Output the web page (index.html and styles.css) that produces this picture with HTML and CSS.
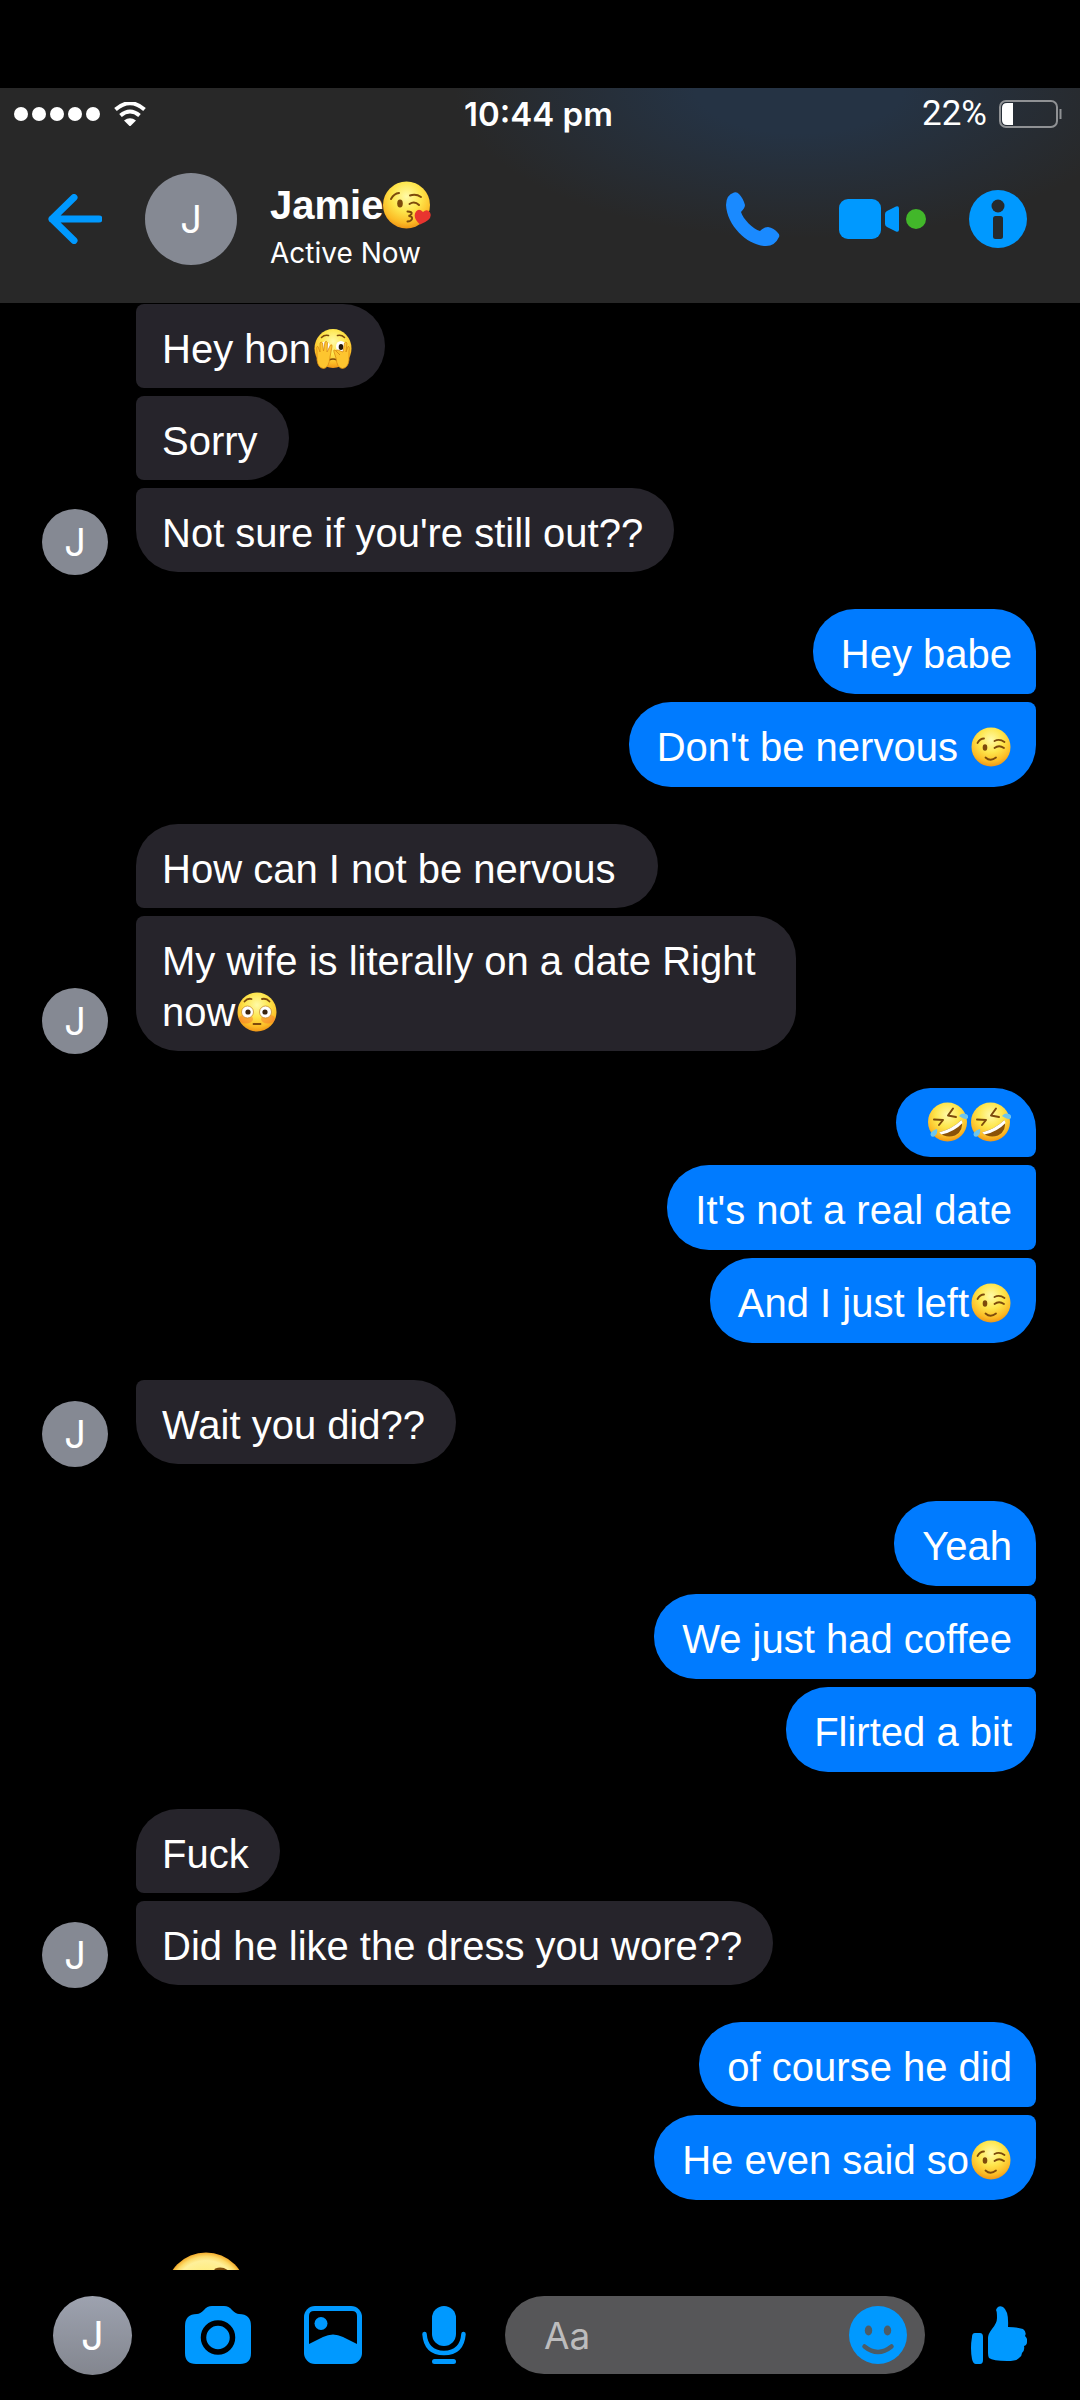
FILE: index.html
```html
<!DOCTYPE html>
<html lang="en">
<head>
<meta charset="utf-8">
<meta name="viewport" content="width=device-width, initial-scale=1">
<title>Jamie</title>
<link rel="stylesheet" href="styles.css">
</head>
<body>
<svg class="defs" aria-hidden="true">
  <defs>
    <radialGradient id="face" cx="50%" cy="32%" r="70%">
      <stop offset="0" stop-color="#fffaa8"/>
      <stop offset=".45" stop-color="#fee64c"/>
      <stop offset=".8" stop-color="#fcbb25"/>
      <stop offset="1" stop-color="#ee9014"/>
    </radialGradient>
    <radialGradient id="bigface" cx="50%" cy="50%" r="50%">
      <stop offset="0" stop-color="#fee64c"/>
      <stop offset=".8" stop-color="#fff09a"/>
      <stop offset=".9" stop-color="#fddc6a"/>
      <stop offset="1" stop-color="#f3ab2b"/>
    </radialGradient>
    <symbol id="wink" viewBox="0 0 40 40">
      <circle cx="20" cy="20" r="19.500" fill="url(#face)"/>
      <ellipse cx="14" cy="20.500" rx="2.300" ry="3.200" fill="#7d4a0b"/>
      <path d="M6.500 16q2.500-4.500 6.500-4.500M23.500 14q5-2.500 10 1M23.500 21q4.500-3.500 9.500 0M14.500 30.500q5 4.500 10.500 0" fill="none" stroke="#7d4a0b" stroke-width="1.800" stroke-linecap="round"/>
    </symbol>
    <symbol id="rofl" viewBox="0 0 40 40">
      <circle cx="19.500" cy="20" r="19.500" fill="url(#face)"/>
      <path d="M6 17.500l9 .5-4 5M25 6.500l-5 7 8 1.500" fill="none" stroke="#7d4a0b" stroke-width="2" stroke-linecap="round" stroke-linejoin="round"/>
      <path d="M11 30.500Q24 27 33.500 18Q36 29 27 33.500Q18 36.500 11 30.500Z" fill="#8a5208"/>
      <path d="M11 30.500Q24 27 33.500 18L34.500 21Q26 30 13.500 32.500Z" fill="#fff"/>
      <path d="M31 14q3-3.500 7-2q3 1.500 2 4q-2 2.500-9-2ZM9 27q1 5-3 7.500q-3 1-3.500-2q0-3.500 6.500-5.500Z" fill="#6cc5ee"/>
    </symbol>
    <symbol id="peek" viewBox="0 0 40 40">
      <ellipse cx="20" cy="19.500" rx="18.500" ry="19.500" fill="url(#face)"/>
      <ellipse cx="12" cy="18" rx="5" ry="5.500" fill="#fff"/>
      <ellipse cx="28" cy="17.500" rx="5" ry="5.500" fill="#fff"/>
      <ellipse cx="28" cy="18" rx="2.300" ry="3" fill="#26180a"/>
      <path d="M8.500 8.500q3-3 7-2M24.500 6.500q4-1 7 2M16 31q4-2 8 0" fill="none" stroke="#7d4a0b" stroke-width="1.600" stroke-linecap="round"/>
      <path d="M4 22q-1-5 1-4.500L7 23 7 14q1-2 2.500 0l1 8L12 13q1.500-1.500 2.500.5L14 23l3.500-7q2-1 1.500 1.500L17 28q-1 11-6.500 11.500Q5 39 4 31Z" fill="#fdc52f" stroke="#d98c12" stroke-width=".8"/>
      <path d="M36 22q1-5-1-4.500L33 23l1-9q-1-2-2.500 0L30 23 25 21q-2-.5-1.500 1.500L27 26l-5-5q-2-.5-1 2l2 6q1 10 6.500 10.500Q35 39 36 31Z" fill="#fdc52f" stroke="#d98c12" stroke-width=".8"/>
    </symbol>
    <symbol id="flushed" viewBox="0 0 40 40">
      <circle cx="20" cy="20" r="19.500" fill="url(#face)"/>
      <ellipse cx="9" cy="27" rx="7" ry="4.500" fill="#f4642a" opacity=".4"/>
      <ellipse cx="31" cy="27" rx="7" ry="4.500" fill="#f4642a" opacity=".4"/>
      <circle cx="10.500" cy="20" r="6" fill="#fff" stroke="#c98d2b" stroke-width=".8"/>
      <circle cx="28.500" cy="20" r="6" fill="#fff" stroke="#c98d2b" stroke-width=".8"/>
      <circle cx="11" cy="20" r="2.600" fill="#3a2410"/>
      <circle cx="28" cy="20" r="2.600" fill="#3a2410"/>
      <path d="M7.500 9.500q3-3.500 7-2.500M25 7q4.500-1 7.500 2.500M16.500 32h7" fill="none" stroke="#7d4a0b" stroke-width="1.800" stroke-linecap="round"/>
    </symbol>
    <symbol id="kiss" viewBox="0 0 48 48">
      <circle cx="23.500" cy="24" r="23.500" fill="url(#face)"/>
      <ellipse cx="17" cy="22.500" rx="2.800" ry="4" fill="#7d4a0b"/>
      <path d="M8 18q3-5.500 8-6M27 14.500q6-2 11 1.500M26.500 23q5-3.500 9.500 1M24.500 30.500q5 0 4 2.500-1 1.500-3 2 4 0 3.500 3-1 2.500-4.500 2.500" fill="none" stroke="#7d4a0b" stroke-width="2" stroke-linecap="round"/>
      <path d="M37 43.500Q29 36 33 30.500q3-3.500 7 .5 4-3.500 7 .5 3.500 7-10 12Z" fill="#e8352f"/>
    </symbol>
    <symbol id="think" viewBox="0 0 82 82">
      <circle cx="41" cy="41" r="40.500" fill="url(#bigface)"/>
      <path d="M51 18q7-3 14 4M20 24q6-4 12-1" fill="none" stroke="#7d4a0b" stroke-width="3" stroke-linecap="round"/>
      <circle cx="28" cy="34" r="4" fill="#7d4a0b"/>
      <circle cx="55" cy="34" r="4" fill="#7d4a0b"/>
      <path d="M28 58h24" stroke="#7d4a0b" stroke-width="4" stroke-linecap="round"/>
    </symbol>
  </defs>
</svg>

<header class="top">
  <div class="status">
    <div class="signal">
      <span class="dot"></span><span class="dot"></span><span class="dot"></span><span class="dot"></span><span class="dot"></span>
      <svg class="wifi" viewBox="0 0 32 24" role="img" aria-label="Wi-Fi">
        <path d="M1.500 7.500Q16-5 30.500 7.500M6.500 13.500q9.500-8 19 0" fill="none" stroke="#fff" stroke-width="4"/>
        <path d="M10 18.500q6-4.500 12 0L16 24.500Z" fill="#fff"/>
      </svg>
    </div>
    <time class="clock">10:44 pm</time>
    <div class="power">
      <span>22%</span>
      <svg class="battery" viewBox="0 0 64 28" aria-hidden="true">
        <rect x="1" y="1" width="57" height="26" rx="6" fill="none" stroke="#8f9194" stroke-width="2"/>
        <path d="M8 3h6v22H8q-5 0-5-5V8q0-5 5-5Z" fill="#fff"/>
        <path d="M61.500 9v10" stroke="#8f9194" stroke-width="2"/>
      </svg>
    </div>
  </div>
  <div class="nav">
    <button class="icon" aria-label="Back">
      <svg width="54" height="50" viewBox="0 0 54 50"><path d="M26 3.500L4 25l22 21.500M4 25h47" fill="none" stroke="#0099ff" stroke-width="7" stroke-linecap="round" stroke-linejoin="round"/></svg>
    </button>
    <span class="avatar avatar-large">J</span>
    <div class="who">
      <h1 class="name">Jamie<svg class="emoji-name" role="img" aria-label="😘"><use href="#kiss"/></svg></h1>
      <p class="active">Active Now</p>
    </div>
    <button class="icon call" aria-label="Voice call">
      <svg width="54" height="54" viewBox="0 0 54 54"><path d="M8 0.500Q0 3 0 13C1 34 22 54 40 54q9 0 13-9 1-2-1-4-4-5-10-6-4 0-8 4C27 37 17 27 15 20q4-4 4-7Q17 6 13 2 11-.5 8 .5Z" fill="#1a8aff"/></svg>
    </button>
    <button class="icon video" aria-label="Video call">
      <svg width="60" height="40" viewBox="0 0 60 40"><rect width="42" height="40" rx="9" fill="#0099ff"/><path d="M46 15q0-2 2-3l9-4.500q3-1 3 2v21q0 3-3 2L48 28q-2-1-2-3Z" fill="#0099ff"/></svg>
      <span class="online"></span>
    </button>
    <button class="icon" aria-label="Conversation details">
      <svg width="58" height="58" viewBox="0 0 58 58"><circle cx="29" cy="29" r="29" fill="#0099ff"/><circle cx="29" cy="16" r="6.500" fill="#262a2c"/><rect x="24" y="26" width="10" height="23" rx="2.500" fill="#262a2c"/></svg>
    </button>
  </div>
</header>

<main class="chat">
  <section class="group in">
    <span class="avatar">J</span>
    <div class="stack">
      <p class="bubble">Hey hon<svg class="emoji" role="img" aria-label="🫣"><use href="#peek"/></svg></p>
      <p class="bubble">Sorry</p>
      <p class="bubble">Not sure if you're still out??</p>
    </div>
  </section>
  <section class="group out">
    <div class="stack">
      <p class="bubble">Hey babe</p>
      <p class="bubble">Don't be nervous <svg class="emoji" role="img" aria-label="😉"><use href="#wink"/></svg></p>
    </div>
  </section>
  <section class="group in first">
    <span class="avatar">J</span>
    <div class="stack">
      <p class="bubble">How can I not be nervous&nbsp;</p>
      <p class="bubble">My wife is literally on a date Right now<svg class="emoji" role="img" aria-label="😳"><use href="#flushed"/></svg></p>
    </div>
  </section>
  <section class="group out">
    <div class="stack">
      <p class="bubble emoji-only"><svg class="emoji" role="img" aria-label="🤣"><use href="#rofl"/></svg><svg class="emoji" role="img" aria-label="🤣"><use href="#rofl"/></svg></p>
      <p class="bubble">It's not a real date</p>
      <p class="bubble">And I just left<svg class="emoji" role="img" aria-label="😉"><use href="#wink"/></svg></p>
    </div>
  </section>
  <section class="group in">
    <span class="avatar">J</span>
    <div class="stack">
      <p class="bubble">Wait you did??</p>
    </div>
  </section>
  <section class="group out">
    <div class="stack">
      <p class="bubble">Yeah</p>
      <p class="bubble">We just had coffee</p>
      <p class="bubble">Flirted a bit</p>
    </div>
  </section>
  <section class="group in first">
    <span class="avatar">J</span>
    <div class="stack">
      <p class="bubble">Fuck</p>
      <p class="bubble">Did he like the dress you wore??</p>
    </div>
  </section>
  <section class="group out">
    <div class="stack">
      <p class="bubble">of course he did</p>
      <p class="bubble">He even said so<svg class="emoji" role="img" aria-label="😉"><use href="#wink"/></svg></p>
    </div>
  </section>
  <section class="group in">
    <div class="stack alone">
      <svg class="emoji-big" role="img" aria-label="🤔"><use href="#think"/></svg>
    </div>
  </section>
</main>

<footer class="composer">
  <span class="avatar avatar-me">J</span>
  <button class="icon camera" aria-label="Camera">
    <svg width="66" height="58" viewBox="0 0 66 58"><path d="M27 0h12q5 0 8 4 4 4 7 4 12 0 12 12v27q0 11-11 11H11Q0 58 0 47V20Q0 8 12 8q3 0 7-4 3-4 8-4Z" fill="#0099ff"/><circle cx="33" cy="31.500" r="14.500" fill="none" stroke="#000" stroke-width="5.500"/></svg>
  </button>
  <button class="icon photo" aria-label="Photos">
    <svg width="58" height="58" viewBox="0 0 58 58"><rect width="58" height="58" rx="11" fill="#0099ff"/><path d="M5 38V10q0-5 5-5h38q5 0 5 5v28l-14-7q-10-5-20 0Z" fill="#000"/><circle cx="17" cy="17.500" r="6.500" fill="#0099ff"/></svg>
  </button>
  <button class="icon mic" aria-label="Voice message">
    <svg width="44" height="58" viewBox="0 0 44 58"><rect x="10" width="24" height="40" rx="12" fill="#0099ff"/><path d="M2.500 28Q4 47 22 47t19.500-19" fill="none" stroke="#0099ff" stroke-width="4.500" stroke-linecap="round"/><rect x="10" y="53" width="24" height="5" rx="2.500" fill="#0099ff"/></svg>
  </button>
  <div class="field">
    <input class="input" type="text" placeholder="Aa" aria-label="Message">
    <button class="icon" aria-label="Stickers">
      <svg width="58" height="58" viewBox="0 0 58 58"><circle cx="29" cy="29" r="29" fill="#0099ff"/><ellipse cx="19.500" cy="24.500" rx="3.700" ry="5" fill="#4d5c66"/><ellipse cx="38.500" cy="24.500" rx="3.700" ry="5" fill="#4d5c66"/><path d="M15.500 40.500q13.500 11 27 0" fill="none" stroke="#4d5c66" stroke-width="4.500" stroke-linecap="round"/></svg>
    </button>
  </div>
  <button class="icon like" aria-label="Send like">
    <svg width="56" height="58" viewBox="0 0 56 58"><path d="M4 27h5q3 0 3 4v23q0 4-3 4H5q-3 0-4-5-2-11 0-22 0-4 3-4Z" fill="#0099ff"/><path d="M26 2q2-3 6-1 6 4 5 20 9 0 15 2 4 3 2 7 3 3 2 6 0 3-3 4 1 4-2 7 0 3-3 5-2 3-12 3-14 0-18-3-1-2-1-5V32q0-4 4-9 5-6 5-11 0-7-1-8Z" fill="#0099ff"/></svg>
  </button>
</footer>
</body>
</html>
```
FILE: styles.css
```css
:root {
  --sent: #007bff;
  --received: #26242b;
  --avatar: #858993;
}

* {
  box-sizing: border-box;
}

body {
  margin: 0;
  padding-top: 88px;
  height: 100vh;
  display: flex;
  flex-direction: column;
  background: #000;
  color: #fff;
  font-family: Inter, "Liberation Sans", sans-serif;
}

h1,
p {
  margin: 0;
}

svg {
  flex: none;
}

.defs {
  position: absolute;
  width: 0;
  height: 0;
}

.icon {
  display: flex;
  align-items: center;
  flex: none;
  padding: 0;
  border: 0;
  background: none;
}

/* Header */

.top {
  flex: none;
  background: radial-gradient(ellipse 32% 70% at 74% 0, #253344 30%, transparent) #282828;
}

.status {
  display: grid;
  grid-template-columns: 1fr auto 1fr;
  align-items: center;
  height: 51px;
  padding: 0 17px 0 14px;
  font-size: 33px;
  line-height: 40px;
}

.signal {
  display: flex;
  align-items: center;
  gap: 4px;
}

.dot {
  width: 14px;
  height: 14px;
  border-radius: 50%;
  background: #fff;
}

.wifi {
  width: 32px;
  height: 24px;
  margin-left: 10px;
}

.clock {
  font-weight: 600;
}

.power {
  display: flex;
  justify-content: flex-end;
  align-items: center;
  gap: 12px;
  font-family: Roboto, "Liberation Sans", sans-serif;
  font-size: 35px;
}

.battery {
  width: 64px;
  height: 28px;
}

.nav {
  display: flex;
  align-items: center;
  height: 164px;
  padding: 0 53px 4px 48px;
}

.avatar {
  display: flex;
  align-items: center;
  justify-content: center;
  flex: none;
  width: 66px;
  height: 66px;
  border-radius: 50%;
  background: var(--avatar);
  font-size: 38px;
}

.avatar-large {
  width: 92px;
  height: 92px;
  margin: 0 33px 0 43px;
}

.who {
  flex: 1;
  padding-top: 18px;
}

.name {
  display: flex;
  align-items: center;
  font-family: "Liberation Sans", sans-serif;
  font-size: 40px;
  line-height: 50px;
  font-weight: 600;
}

.emoji-name {
  width: 48px;
  height: 48px;
}

.active {
  font-size: 28px;
  line-height: 46px;
}

.call {
  margin-right: 59px;
}

.video {
  gap: 7px;
  margin-right: 43px;
}

.online {
  width: 20px;
  height: 20px;
  border-radius: 50%;
  background: #42b72a;
}

/* Conversation */

.chat {
  flex: 1;
  min-height: 0;
  overflow: hidden;
  display: flex;
  flex-direction: column;
  gap: 37px;
  padding: 1px 44px 0 42px;
}

.group {
  flex: none;
  display: flex;
  align-items: flex-end;
  gap: 28px;
}

.group .avatar {
  margin-bottom: -3px;
}

.stack {
  display: flex;
  flex-direction: column;
  align-items: flex-start;
  gap: 8px;
  max-width: 660px;
}

.alone {
  padding: 15px 0 0 123px;
}

.out {
  justify-content: flex-end;
}

.out .stack {
  align-items: flex-end;
}

.bubble {
  padding: 20px 31px 13px 26px;
  border-radius: 8px 42px 42px 8px;
  background: var(--received);
  font-family: "Liberation Sans", sans-serif;
  font-size: 40px;
  line-height: 51px;
}

.in .bubble:last-child {
  border-bottom-left-radius: 42px;
}

.first .bubble:first-child {
  border-top-left-radius: 42px;
}

.out .bubble {
  padding: 20px 24px 14px 28px;
  border-radius: 42px 8px 8px 42px;
  background: var(--sent);
}

.out .bubble:first-child {
  border-top-right-radius: 42px;
}

.out .bubble:last-child {
  border-bottom-right-radius: 42px;
}

.out .emoji-only {
  display: flex;
  padding: 14px 24px 15px 30px;
  border-radius: 35px;
}

.out .emoji-only:first-child {
  border-bottom-right-radius: 8px;
}

.emoji {
  width: 40px;
  height: 40px;
  margin: 0 1px 0 2px;
  vertical-align: -6px;
}

.emoji-big {
  width: 82px;
  height: 82px;
}

/* Composer */

.composer {
  flex: none;
  display: flex;
  align-items: center;
  height: 130px;
  padding: 0 53px;
}

.avatar-me {
  width: 79px;
  height: 79px;
  background: linear-gradient(#9da2af, #83868f);
  font-size: 40px;
}

.camera,
.photo {
  margin-left: 53px;
}

.mic {
  margin: 0 39px 0 60px;
}

.field {
  flex: 1;
  min-width: 0;
  display: flex;
  align-items: center;
  height: 78px;
  padding: 0 18px 0 39px;
  border-radius: 39px;
  background: #565658;
}

.input {
  flex: 1;
  min-width: 0;
  padding: 0;
  border: 0;
  outline: 0;
  background: none;
  color: #fff;
  font: inherit;
  font-size: 37px;
}

.input::placeholder {
  color: #bcbcbd;
  opacity: 1;
}

.like {
  margin-left: 46px;
}
```
